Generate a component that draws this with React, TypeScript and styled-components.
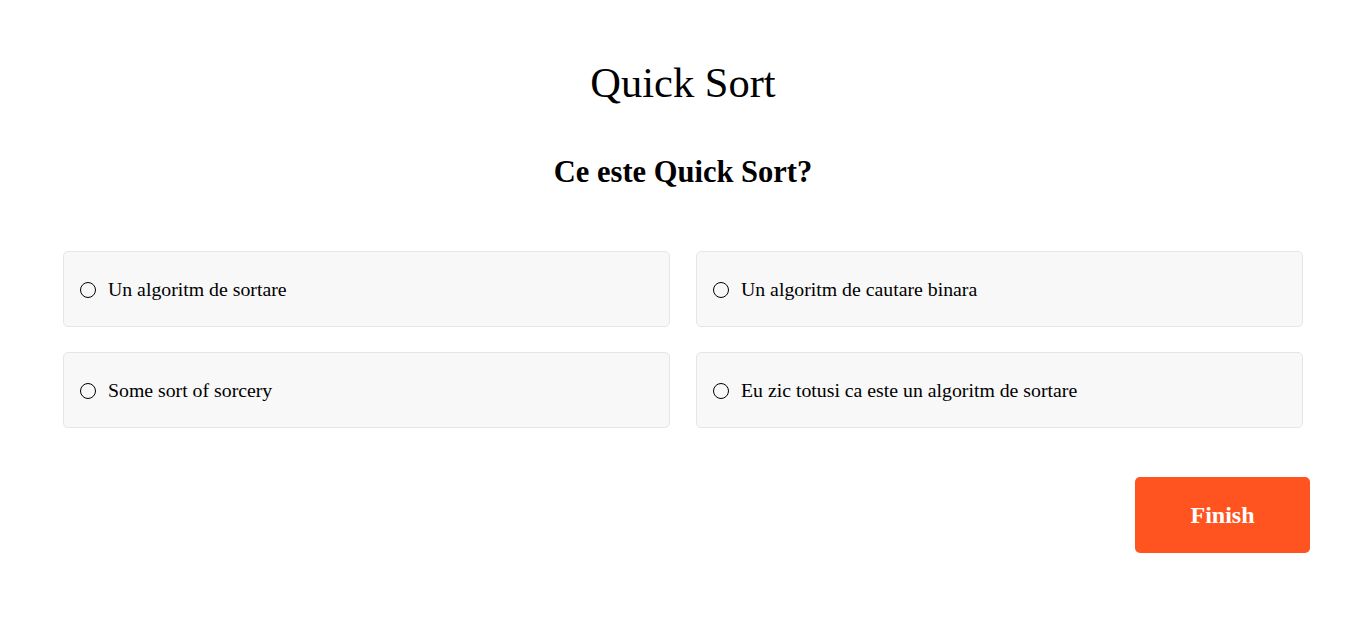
import React from "react";
import styled, { createGlobalStyle } from "styled-components";

const GlobalStyle = createGlobalStyle`
  html, body { margin: 0; padding: 0; background: #ffffff; }
  body { font-family: "Liberation Serif", "Times New Roman", serif; color: #000; }
`;

const Page = styled.main`
  display: flex;
  flex-direction: column;
  padding: 59px 0 0;
`;

const Title = styled.h1`
  margin: 0;
  text-align: center;
  font-size: 42.5px;
  line-height: 48px;
  font-weight: 400;
  padding-left: 3px;
`;

const Question = styled.h2`
  margin: 47px 0 0;
  text-align: center;
  font-size: 30.5px;
  line-height: 36px;
  font-weight: 700;
  padding-left: 3px;
`;

const Options = styled.div`
  display: grid;
  grid-template-columns: 1fr 1fr;
  column-gap: 26px;
  row-gap: 25px;
  margin: 61px 60px 0 63px;
`;

const Option = styled.label`
  display: flex;
  align-items: center;
  gap: 12px;
  height: 76px;
  box-sizing: border-box;
  padding: 1px 16px 0;
  background: #f8f8f8;
  border: 1px solid #e6e6e6;
  border-radius: 5px;
  font-size: 19.8px;
  cursor: pointer;
`;

const Radio = styled.span`
  width: 16px;
  height: 16px;
  box-sizing: border-box;
  border: 1.6px solid #000;
  border-radius: 50%;
  flex: none;
`;

const Actions = styled.div`
  display: flex;
  justify-content: flex-end;
  margin: 49px 53px 0 0;
`;

const FinishButton = styled.button`
  width: 175px;
  height: 76px;
  border: none;
  border-radius: 5px;
  background: #ff5420;
  color: #fff;
  font-family: "Liberation Serif", "Times New Roman", serif;
  font-size: 24px;
  font-weight: 700;
  cursor: pointer;
`;

const answers = [
  "Un algoritm de sortare",
  "Un algoritm de cautare binara",
  "Some sort of sorcery",
  "Eu zic totusi ca este un algoritm de sortare",
];

export default function App() {
  return (
    <>
      <GlobalStyle />
      <Page>
        <Title>Quick Sort</Title>
        <Question>Ce este Quick Sort?</Question>
        <Options>
          {answers.map((a) => (
            <Option key={a}>
              <Radio />
              <span>{a}</span>
            </Option>
          ))}
        </Options>
        <Actions>
          <FinishButton>Finish</FinishButton>
        </Actions>
      </Page>
    </>
  );
}
